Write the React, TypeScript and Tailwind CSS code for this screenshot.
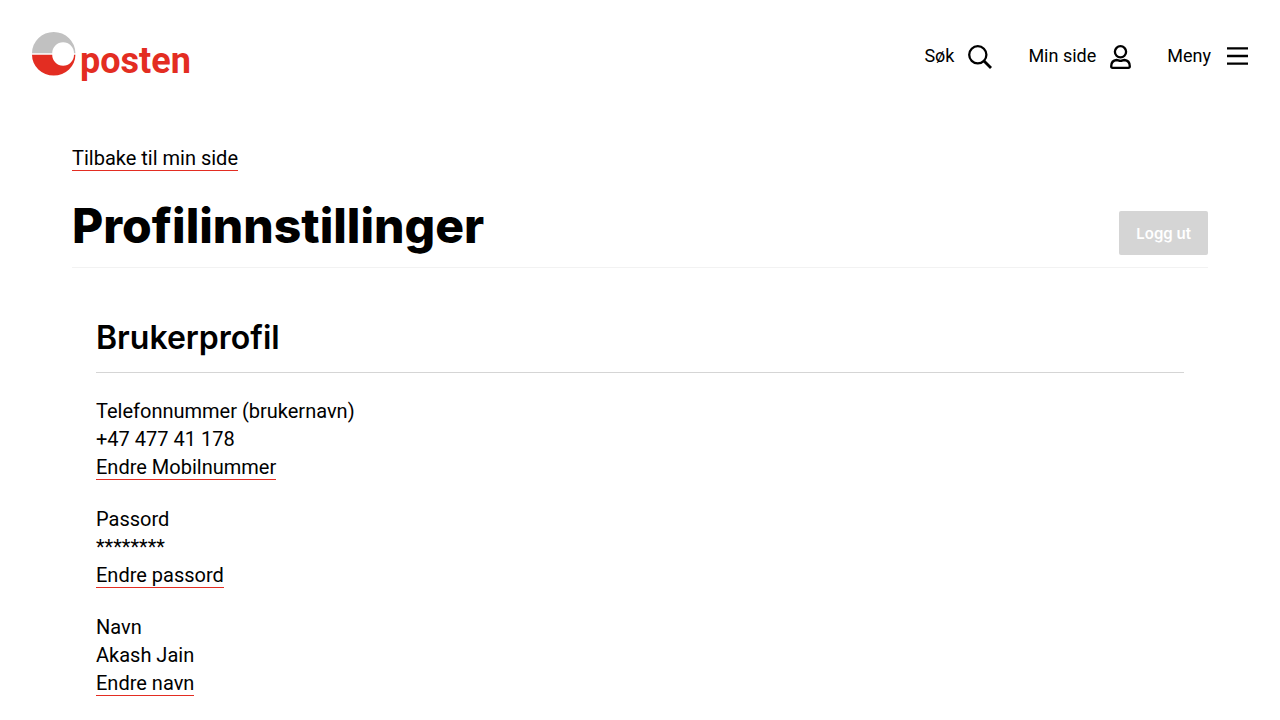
import type { ReactNode } from "react";

function TextLink({ children }: { children: ReactNode }) {
  return (
    <a
      href="#"
      className="inline-block h-[27px] border-b border-[#e32d22] leading-7"
    >
      {children}
    </a>
  );
}

function Logo() {
  return (
    <span className="flex h-12 gap-1">
      <svg viewBox="0 0 44 44" className="size-11" aria-hidden="true">
        <path d="M0 21.2A21.7 21.2 0 0 1 43.4 21.2H42A10.9 10.9 0 0 0 20.2 21.2Z" fill="#c1c1c1" />
        <path d="M0 22.8H20.2A10.9 10.9 0 0 0 42 22.8H43.4A21.7 20.8 0 0 1 0 22.8Z" fill="#e32d22" />
      </svg>
      <span className="pt-2 text-4xl leading-[42px] font-bold text-[#e32d22]">posten</span>
    </span>
  );
}

function SearchIcon() {
  return (
    <svg viewBox="0 0 24 24" className="mt-0.5 size-6" fill="none" stroke="#000" strokeWidth="2.3" aria-hidden="true">
      <circle cx="9.8" cy="9.8" r="8.6" />
      <path d="M16 16L23 23" strokeWidth="2.8" />
    </svg>
  );
}

function UserIcon() {
  return (
    <svg viewBox="0 0 21 24" className="mt-0.5 h-6 w-[21px]" fill="none" stroke="#000" strokeWidth="2.3" aria-hidden="true">
      <circle cx="10.5" cy="6.8" r="5.6" />
      <path d="M6.6 15C3.4 15.3 1.3 17.4 1.2 21.2C1.2 22.3 1.7 22.8 2.7 22.8H18.3C19.3 22.8 19.8 22.3 19.8 21.2C19.7 17.4 17.6 15.3 14.4 15C12.8 15 12.4 15.8 10.5 15.8C8.6 15.8 8.2 15 6.6 15Z" />
    </svg>
  );
}

function MenuIcon() {
  return (
    <svg viewBox="0 0 21 18" className="h-[18px] w-[21px]" fill="none" stroke="#000" strokeWidth="2.3" aria-hidden="true">
      <path d="M0 1.3H21M0 9H21M0 16.7H21" />
    </svg>
  );
}

const fields = [
  { label: "Telefonnummer (brukernavn)", value: "+47 477 41 178", action: "Endre Mobilnummer" },
  { label: "Passord", value: "********", action: "Endre passord" },
  { label: "Navn", value: "Akash Jain", action: "Endre navn" },
];

export default function App() {
  return (
    <div className="bg-white font-['Roboto','Noto_Sans',sans-serif] text-black">
      <header className="flex h-28 items-center justify-between px-8">
        <a href="#">
          <Logo />
        </a>
        <nav className="flex items-center gap-9 text-lg">
          <button type="button" className="flex items-center gap-3.5">
            Søk
            <SearchIcon />
          </button>
          <button type="button" className="flex items-center gap-3.5">
            Min side
            <UserIcon />
          </button>
          <button type="button" className="flex items-center gap-4">
            Meny
            <MenuIcon />
          </button>
        </nav>
      </header>

      <main className="px-[72px] pt-8 text-xl leading-7">
        <div className="h-7">
          <TextLink>Tilbake til min side</TextLink>
        </div>
        <div className="mt-6 flex items-end justify-between border-b border-[#f2f2f2] pb-3">
          <h1 className="font-['Inter',sans-serif] text-5xl leading-[59px] font-extrabold">
            Profilinnstillinger
          </h1>
          <button
            type="button"
            className="h-11 rounded-[2px] bg-[#d5d5d5] px-[17px] pt-0.5 font-['Inter',sans-serif] text-[15px] font-semibold text-white"
          >
            Logg ut
          </button>
        </div>

        <section className="px-6 pt-[50px]">
          <h2 className="border-b border-[#d5d5d5] pb-3.5 font-['Inter',sans-serif] text-[32px] leading-10 font-semibold">
            Brukerprofil
          </h2>
          <dl className="flex flex-col gap-6 pt-6">
            {fields.map((field) => (
              <div key={field.label}>
                <dt>{field.label}</dt>
                <dd>{field.value}</dd>
                <dd className="h-7">
                  <TextLink>{field.action}</TextLink>
                </dd>
              </div>
            ))}
          </dl>
        </section>
      </main>
    </div>
  );
}
